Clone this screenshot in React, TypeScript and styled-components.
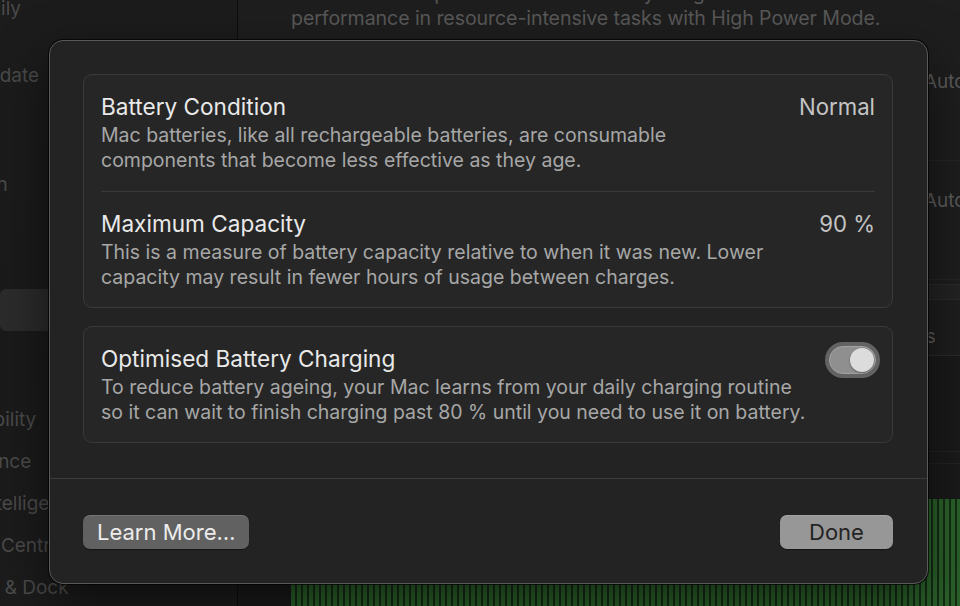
import React from "react";
import styled, { createGlobalStyle } from "styled-components";

const GlobalStyle = createGlobalStyle`
  html, body {
    margin: 0;
    padding: 0;
    background: #1b1b1b;
  }
  body {
    font-family: Inter, "Noto Sans", "Liberation Sans", sans-serif;
    -webkit-font-smoothing: antialiased;
  }
`;

const Screen = styled.div`
  position: relative;
  width: 960px;
  height: 606px;
  overflow: hidden;
  display: grid;
  grid-template-columns: 237px 1px 1fr;
  background: #1e1e1e;
`;

/* ---------- background: settings window behind the sheet ---------- */

const Sidebar = styled.div`
  background: linear-gradient(180deg, #1c1c1c 0%, #1a1a1a 60%, #1c1c1c 100%);
  display: flex;
  flex-direction: column;
  margin-top: -13px;
`;

const SideItem = styled.div<{ $shift: number; $selected?: boolean; $gap?: boolean }>`
  height: 42px;
  flex: none;
  display: flex;
  align-items: center;
  margin-top: ${(p) => (p.$gap ? "25px" : "0")};
  background: ${(p) => (p.$selected ? "#2b2b2b" : "transparent")};
  border-radius: 6px;
  white-space: nowrap;
  font-size: 19px;
  color: #4a4a4a;
  span {
    margin-left: ${(p) => p.$shift}px;
  }
`;

const SideRule = styled.div`
  background: #0d0d0d;
`;

const Main = styled.div`
  display: flex;
  flex-direction: column;
  padding-left: 53px;
  background: #1e1e1e;
  min-width: 0;
`;

const Intro = styled.p`
  margin: -19px 0 0;
  font-size: 19.6px;
  line-height: 25px;
  color: #585858;
  white-space: nowrap;
  letter-spacing: -0.1px;
`;

const Rows = styled.div`
  margin-top: 11px;
`;

const SettingRow = styled.div`
  display: grid;
  grid-template-columns: 633px 1fr;
  height: 119px;
  box-sizing: border-box;
  padding-top: 27px;
  border-bottom: 1px solid #262626;
  font-size: 19px;
  line-height: 26px;
  color: #5b5b5b;
  white-space: nowrap;
`;

const Band = styled.div`
  height: 14px;
  margin-top: 4px;
  background: #232323;
  border-top: 1px solid #2a2a2a;
  border-bottom: 1px solid #2a2a2a;
`;

const TabRow = styled.div`
  display: grid;
  grid-template-columns: 532px 1fr;
  height: 56px;
  box-sizing: border-box;
  padding-top: 24px;
  border-bottom: 1px solid #2c2c2c;
  font-size: 19px;
  line-height: 26px;
  color: #5d5d5d;
  white-space: nowrap;
`;

const ChartArea = styled.div`
  flex: 1;
  display: flex;
  flex-direction: column;
  margin-left: -53px;
  padding-left: 53px;
  background: #1a1a1a;
`;

const GridLine = styled.div<{ $top: number }>`
  margin-top: ${(p) => p.$top}px;
  height: 1px;
  background: #232323;
`;

const Bars = styled.div`
  margin-top: 35px;
  flex: 1;
  background: repeating-linear-gradient(
    90deg,
    #2b622a 0px,
    #2b622a 4px,
    #142c14 4px,
    #142c14 6px
  );
`;

/* ---------- sheet ---------- */

const Sheet = styled.div`
  position: absolute;
  left: 49px;
  top: 40px;
  width: 879px;
  box-sizing: border-box;
  background: #232323;
  border: 1px solid #595959;
  border-radius: 14px;
  box-shadow: 0 0 0 1px rgba(0, 0, 0, 0.7), 0 18px 50px rgba(0, 0, 0, 0.55);
  display: flex;
  flex-direction: column;
`;

const SheetBody = styled.div`
  display: flex;
  flex-direction: column;
  gap: 18px;
  padding: 33px 34px 35px 33px;
`;

const Card = styled.div`
  border: 1px solid #3a3a3a;
  border-radius: 9px;
  background: #262626;
  padding: 0 17px;
`;

const InfoRow = styled.div`
  display: flex;
  justify-content: space-between;
  align-items: flex-start;
  padding: 19px 0 18px;
  & + & {
    border-top: 1px solid #3a3a3a;
  }
  &:last-child {
    padding-bottom: 17px;
  }
`;

const InfoText = styled.div`
  display: flex;
  flex-direction: column;
  gap: 3px;
`;

const Title = styled.div`
  font-size: 22.6px;
  line-height: 26px;
  color: #e9e9e9;
`;

const Desc = styled.div`
  font-size: 19.5px;
  line-height: 25px;
  color: #a7a7a7;
  white-space: pre-line;
`;

const Value = styled.div`
  font-size: 22.2px;
  line-height: 26px;
  color: #c4c4c4;
`;

const ToggleRing = styled.div`
  margin: -4px -5px 0 0;
  width: 55px;
  height: 36px;
  box-sizing: border-box;
  padding: 4px;
  border-radius: 18px;
  background: #636363;
  flex: none;
`;

const ToggleTrack = styled.div`
  height: 100%;
  box-sizing: border-box;
  border-radius: 14px;
  background: #8f8f8f;
  border: 1px solid #a3a3a3;
  display: flex;
  justify-content: flex-end;
  align-items: center;
  padding: 1px;
`;

const Knob = styled.div`
  width: 24px;
  height: 24px;
  border-radius: 50%;
  background: #dcdcdc;
  box-shadow: 0 1px 2px rgba(0, 0, 0, 0.35);
`;

const Footer = styled.div`
  border-top: 1px solid #3b3b3b;
  display: flex;
  justify-content: space-between;
  align-items: center;
  padding: 36px 34px 34px 33px;
`;

const Button = styled.button<{ $primary?: boolean }>`
  height: 34px;
  min-width: ${(p) => (p.$primary ? "113px" : "0")};
  padding: 0 14px;
  border: none;
  border-radius: 7px;
  font-family: inherit;
  font-size: 22px;
  line-height: 34px;
  background: ${(p) => (p.$primary ? "#979797" : "#616161")};
  color: ${(p) => (p.$primary ? "#232323" : "#ececec")};
  box-shadow: inset 0 1px 0 rgba(255, 255, 255, 0.12), 0 1px 1px rgba(0, 0, 0, 0.4);
`;

const sideItems = [
  { label: "Family", shift: -37 },
  { label: "Software Update", shift: -112, gap: true },
  { label: "Wi-Fi", shift: -70, gap: true },
  { label: "Bluetooth", shift: -78 },
  { label: "Network", shift: -90 },
  { label: "VPN", shift: -70 },
  { label: "Battery", shift: -70, selected: true },
  { label: "General", shift: -80, gap: true },
  { label: "Accessibility", shift: -77 },
  { label: "Appearance", shift: -78 },
  { label: "Apple Intelligence & Siri", shift: -78 },
  { label: "Control Centre", shift: -70 },
  { label: "Desktop & Dock", shift: -75 },
];

export default function App() {
  return (
    <>
      <GlobalStyle />
      <Screen>
        <Sidebar>
          {sideItems.map((it) => (
            <SideItem key={it.label} $shift={it.shift} $gap={it.gap} $selected={it.selected}>
              <span>{it.label}</span>
            </SideItem>
          ))}
        </Sidebar>
        <SideRule />
        <Main>
          <Intro>
            Your Mac can optimise either its battery usage with Low Power Mode or
            <br />
            performance in resource-intensive tasks with High Power Mode.
          </Intro>
          <Rows>
            <SettingRow>
              <span>Low Power Mode</span>
              <span>Automatic</span>
            </SettingRow>
            <SettingRow>
              <span>High Power Mode</span>
              <span>Automatic</span>
            </SettingRow>
          </Rows>
          <Band />
          <TabRow>
            <span>Last 24 Hours</span>
            <span>Last 10 Days</span>
          </TabRow>
          <ChartArea>
            <GridLine $top={95} />
            <GridLine $top={11} />
            <Bars />
          </ChartArea>
        </Main>

        <Sheet>
          <SheetBody>
            <Card>
              <InfoRow>
                <InfoText>
                  <Title>Battery Condition</Title>
                  <Desc>
                    {"Mac batteries, like all rechargeable batteries, are consumable\ncomponents that become less effective as they age."}
                  </Desc>
                </InfoText>
                <Value>Normal</Value>
              </InfoRow>
              <InfoRow>
                <InfoText>
                  <Title>Maximum Capacity</Title>
                  <Desc>
                    {"This is a measure of battery capacity relative to when it was new. Lower\ncapacity may result in fewer hours of usage between charges."}
                  </Desc>
                </InfoText>
                <Value>90 %</Value>
              </InfoRow>
            </Card>
            <Card>
              <InfoRow>
                <InfoText>
                  <Title>Optimised Battery Charging</Title>
                  <Desc>
                    {"To reduce battery ageing, your Mac learns from your daily charging routine\nso it can wait to finish charging past 80 % until you need to use it on battery."}
                  </Desc>
                </InfoText>
                <ToggleRing>
                  <ToggleTrack>
                    <Knob />
                  </ToggleTrack>
                </ToggleRing>
              </InfoRow>
            </Card>
          </SheetBody>
          <Footer>
            <Button>Learn More…</Button>
            <Button $primary>Done</Button>
          </Footer>
        </Sheet>
      </Screen>
    </>
  );
}
